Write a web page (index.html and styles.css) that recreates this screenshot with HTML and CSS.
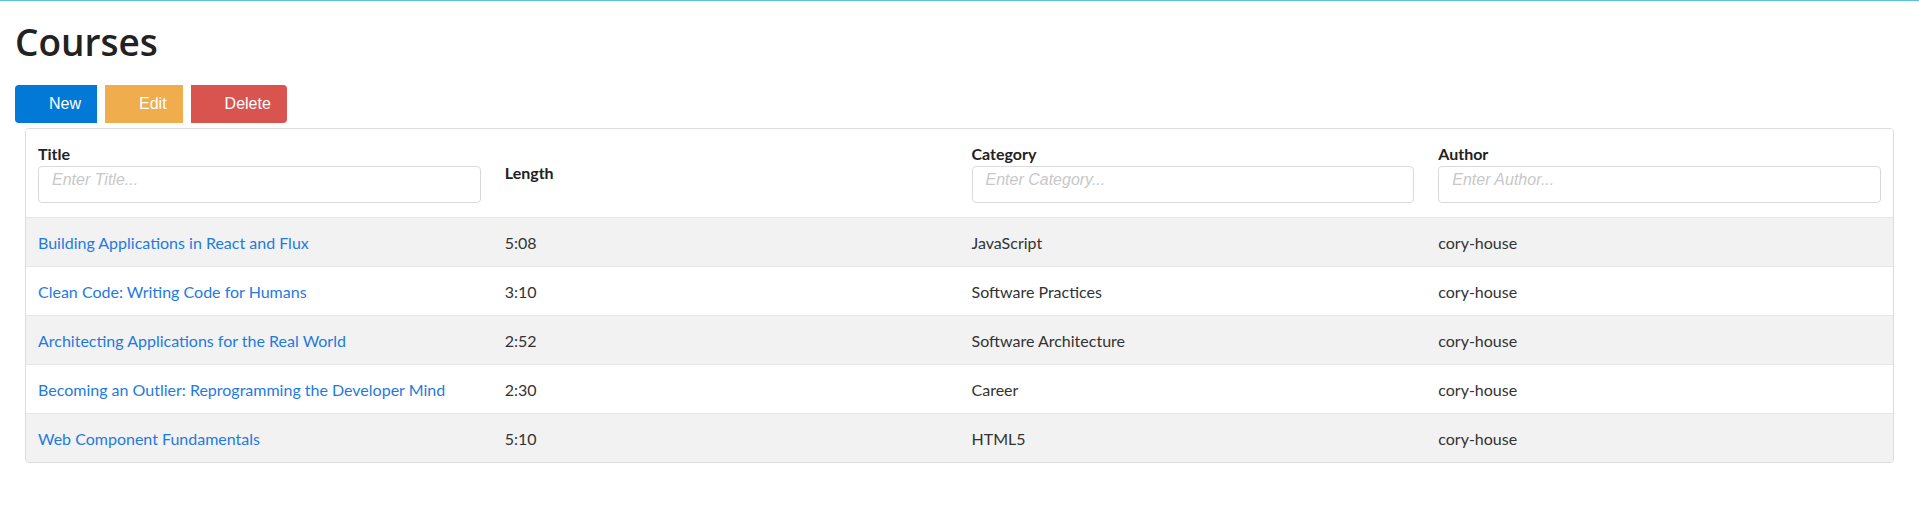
FILE: index.html
```html
<!DOCTYPE html>
<html lang="en">
<head>
<meta charset="utf-8">
<title>Courses</title>
<link rel="stylesheet" href="styles.css">
</head>
<body>
<div class="topline"></div>
<div class="container">
  <h1 class="page-title">Courses</h1>
  <div class="toolbar">
    <button class="btn btn-new">New</button>
    <button class="btn btn-edit">Edit</button>
    <button class="btn btn-delete">Delete</button>
  </div>
  <div class="panel">
    <table class="grid">
      <thead>
        <tr>
          <th><div class="label">Title</div><input class="filter" type="text" placeholder="Enter Title..."></th>
          <th>Length</th>
          <th><div class="label">Category</div><input class="filter" type="text" placeholder="Enter Category..."></th>
          <th><div class="label">Author</div><input class="filter" type="text" placeholder="Enter Author..."></th>
        </tr>
      </thead>
      <tbody>
        <tr><td><a href="#">Building Applications in React and Flux</a></td><td>5:08</td><td>JavaScript</td><td>cory-house</td></tr>
        <tr><td><a href="#">Clean Code: Writing Code for Humans</a></td><td>3:10</td><td>Software Practices</td><td>cory-house</td></tr>
        <tr><td><a href="#">Architecting Applications for the Real World</a></td><td>2:52</td><td>Software Architecture</td><td>cory-house</td></tr>
        <tr><td><a href="#">Becoming an Outlier: Reprogramming the Developer Mind</a></td><td>2:30</td><td>Career</td><td>cory-house</td></tr>
        <tr><td><a href="#">Web Component Fundamentals</a></td><td>5:10</td><td>HTML5</td><td>cory-house</td></tr>
      </tbody>
    </table>
  </div>
</div>
</body>
</html>
```
FILE: styles.css
```css
html, body {
  margin: 0;
  padding: 0;
  background: #fff;
}
body {
  font-family: "Lato", "Noto Sans", sans-serif;
  font-size: 16px;
  color: #333;
}
.topline {
  height: 1px;
  background: #5bc0de;
}
.container {
  padding: 0 15px;
}
.page-title {
  font-family: "Open Sans", "Noto Sans", sans-serif;
  font-weight: 600;
  font-size: 37px;
  line-height: 44px;
  color: #222;
  margin: 19px 0 21px 0;
}
.toolbar {
  display: flex;
  gap: 8px;
  height: 38px;
}
.btn {
  font-family: "Liberation Sans", Arial, sans-serif;
  font-size: 16px;
  color: #fff;
  border: none;
  height: 38px;
  padding: 0 16px 0 34px;
  margin: 0;
  cursor: pointer;
}
.btn-new {
  background: #0278d7;
  border-radius: 4px 0 0 4px;
}
.btn-edit {
  background: #f0ad4e;
  border-radius: 0;
}
.btn-delete {
  background: #d9534f;
  border-radius: 0 4px 4px 0;
}
.panel {
  margin: 5px 10px 0 10px;
  border: 1px solid #dcdcdc;
  border-radius: 4px;
  overflow: hidden;
}
.grid {
  width: 100%;
  border-collapse: collapse;
  table-layout: fixed;
}
.grid th {
  text-align: left;
  vertical-align: middle;
  font-weight: 700;
  color: #222;
  line-height: 24px;
  padding: 13px 12px 14px 12px;
  background: #fff;
}
.label {
  line-height: 24px;
}
.filter {
  display: block;
  box-sizing: border-box;
  width: 100%;
  height: 37px;
  margin: 0;
  padding: 0 13px 10px 13px;
  border: 1px solid #dadada;
  border-radius: 4px;
  font-family: "Liberation Sans", Arial, sans-serif;
  font-size: 16px;
  font-style: italic;
  color: #333;
  background: #fff;
}
.filter::placeholder {
  color: #c8c8c8;
  font-style: italic;
}
.grid td {
  padding: 13px 12px 11px 12px;
  line-height: 24px;
  border-top: 1px solid #e6e6e6;
  color: #333;
  white-space: nowrap;
}
.grid tbody tr:nth-child(odd) td {
  background: #f2f2f2;
}
.grid a {
  color: #1f7ae0;
  text-decoration: none;
}
```
